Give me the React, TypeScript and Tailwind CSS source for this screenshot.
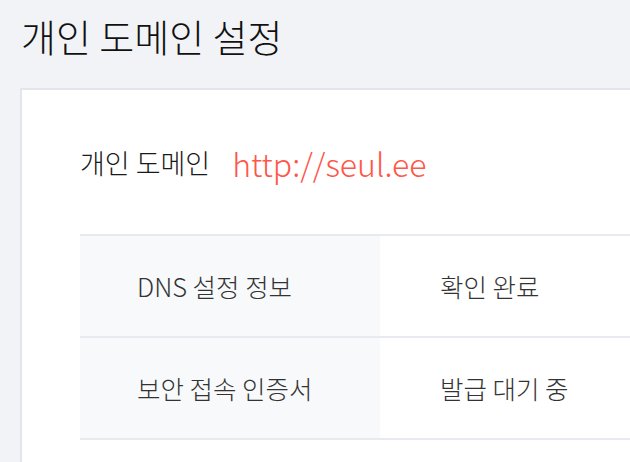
import React from "react";

const rows = [
  { label: "DNS 설정 정보", value: "확인 완료" },
  { label: "보안 접속 인증서", value: "발급 대기 중" },
];

export default function App() {
  return (
    <div
      className="w-[630px] h-[462px] overflow-hidden bg-[#f2f3f6]"
      style={{ fontFamily: '"Noto Sans CJK KR", "Noto Sans", sans-serif' }}
    >
      <div className="pl-5 pt-[88px] relative">
        <h1 className="absolute left-[21px] top-[11px] text-[38px] leading-[50px] font-light text-[#111] whitespace-nowrap">
          개인 도메인 설정
        </h1>
        <div className="w-[800px] h-[400px] bg-white border-2 border-[#e2e5ec]">
          <div className="h-[144px] pl-[58px] flex items-center pt-[2px]">
            <span className="text-[27px] font-light text-[#1a1a1a]">개인 도메인</span>
            <span className="ml-[22px] text-[32px] font-light text-[#ff5648]">http://seul.ee</span>
          </div>
          <div className="ml-[58px] border-t-2 border-[#e9eaef]">
            {rows.map((r) => (
              <div key={r.label} className="flex h-[102px] border-b-2 border-[#e9eaef]">
                <div className="w-[300px] bg-[#f8f9fb] pl-[57px] flex items-center text-[25.5px] font-light text-[#333]">
                  {r.label}
                </div>
                <div className="flex-1 pl-[60px] flex items-center text-[25.5px] font-light text-[#333]">
                  {r.value}
                </div>
              </div>
            ))}
          </div>
        </div>
      </div>
    </div>
  );
}
